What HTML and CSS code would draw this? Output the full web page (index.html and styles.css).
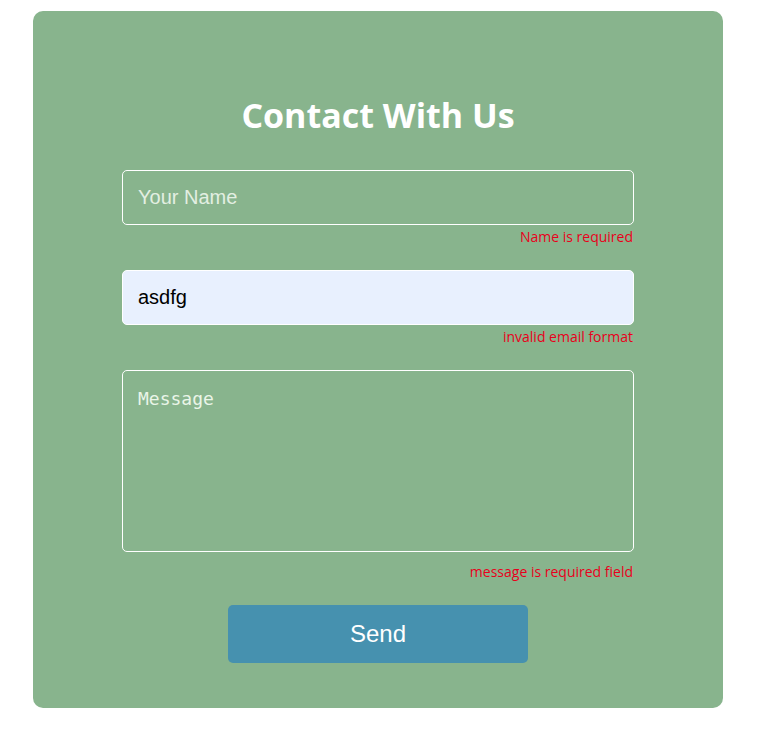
FILE: index.html
```html
<!DOCTYPE html>
<html>
<head>
<meta charset="utf-8">
<link rel="stylesheet" href="styles.css">
</head>
<body>
<div class="card">
  <h1 class="title">Contact With Us</h1>
  <form class="form">
    <div class="field">
      <input class="input" type="text" placeholder="Your Name">
      <div class="error">Name is required</div>
    </div>
    <div class="field">
      <input class="input filled" type="text" value="asdfg">
      <div class="error">invalid email format</div>
    </div>
    <div class="field">
      <textarea class="input area" placeholder="Message"></textarea>
      <div class="error">message is required field</div>
    </div>
    <button class="send" type="button">Send</button>
  </form>
</div>
</body>
</html>
```
FILE: styles.css
```css
html, body {
  margin: 0;
  padding: 0;
  background: #ffffff;
}
body {
  padding: 11px 0 0 33px;
}
.card {
  width: 690px;
  height: 697px;
  box-sizing: border-box;
  background: #88b48d;
  border-radius: 10px;
  padding: 82px 0 0 0;
  display: flex;
  flex-direction: column;
  align-items: center;
}
.title {
  margin: 0;
  font-family: "Open Sans", sans-serif;
  font-weight: 700;
  font-size: 34px;
  line-height: 44px;
  color: #ffffff;
}
.form {
  margin-top: 33px;
  width: 512px;
  display: flex;
  flex-direction: column;
}
.field {
  display: flex;
  flex-direction: column;
  margin-bottom: 21px;
}
.input {
  box-sizing: border-box;
  width: 512px;
  height: 55px;
  border: 1px solid #ffffff;
  border-radius: 5px;
  background: transparent;
  padding: 0 15px;
  font-family: "Liberation Sans", Arial, sans-serif;
  font-size: 20px;
  color: #000000;
  outline: none;
}
.input::placeholder {
  color: #e3efe2;
}
.filled {
  background: #e8f0fe;
}
.area {
  height: 182px;
  resize: none;
  padding: 17px 15px;
  margin-bottom: 8px;
  font-family: "DejaVu Sans Mono", monospace;
  font-size: 18px;
}
.area::placeholder {
  color: #eaf5e8;
}
.error {
  align-self: flex-end;
  margin-right: 1px;
  font-family: "Open Sans", sans-serif;
  font-size: 14px;
  line-height: 24px;
  color: #e8001c;
}
.send {
  align-self: center;
  margin-top: 0;
  width: 300px;
  height: 58px;
  border: none;
  border-radius: 5px;
  background: #4691af;
  color: #ffffff;
  font-family: "Liberation Sans", Arial, sans-serif;
  font-size: 24px;
}
```
